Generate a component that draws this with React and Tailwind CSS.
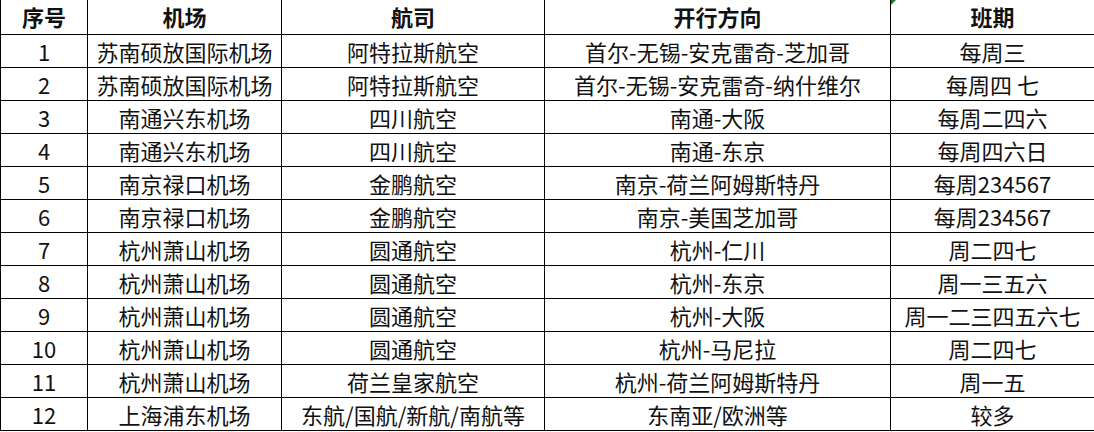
import React from "react";

const headers = ["序号", "机场", "航司", "开行方向", "班期"];

const rows = [
  ["1", "苏南硕放国际机场", "阿特拉斯航空", "首尔-无锡-安克雷奇-芝加哥", "每周三"],
  ["2", "苏南硕放国际机场", "阿特拉斯航空", "首尔-无锡-安克雷奇-纳什维尔", "每周四 七"],
  ["3", "南通兴东机场", "四川航空", "南通-大阪", "每周二四六"],
  ["4", "南通兴东机场", "四川航空", "南通-东京", "每周四六日"],
  ["5", "南京禄口机场", "金鹏航空", "南京-荷兰阿姆斯特丹", "每周234567"],
  ["6", "南京禄口机场", "金鹏航空", "南京-美国芝加哥", "每周234567"],
  ["7", "杭州萧山机场", "圆通航空", "杭州-仁川", "周二四七"],
  ["8", "杭州萧山机场", "圆通航空", "杭州-东京", "周一三五六"],
  ["9", "杭州萧山机场", "圆通航空", "杭州-大阪", "周一二三四五六七"],
  ["10", "杭州萧山机场", "圆通航空", "杭州-马尼拉", "周二四七"],
  ["11", "杭州萧山机场", "荷兰皇家航空", "杭州-荷兰阿姆斯特丹", "周一五"],
  ["12", "上海浦东机场", "东航/国航/新航/南航等", "东南亚/欧洲等", "较多"],
];

export default function App() {
  return (
    <div className="h-[432px] w-[1094px] overflow-hidden bg-[#ffffff] font-['Noto_Sans_CJK_SC',sans-serif] text-[22px] text-[#111111]">
      <table className="w-[1094px] table-fixed border-collapse">
        <colgroup>
          <col className="w-[87px]" />
          <col className="w-[194px]" />
          <col className="w-[263px]" />
          <col className="w-[346px]" />
          <col className="w-[204px]" />
        </colgroup>
        <thead>
          <tr>
            {headers.map((h, i) => (
              <th
                key={h}
                className="relative h-[34px] border-[1px] border-t-0 border-solid border-[#000000] p-0 text-center font-bold whitespace-nowrap"
              >
                {i === 4 && (
                  <span className="absolute left-0 top-0 h-[5px] w-[5px] bg-[#1b7d2c] [clip-path:polygon(0_0,100%_0,0_100%)]" />
                )}
                {h}
              </th>
            ))}
          </tr>
        </thead>
        <tbody>
          {rows.map((r) => (
            <tr key={r[0]}>
              {r.map((v, i) => (
                <td
                  key={i}
                  className="h-[33px] border-[1px] border-solid border-[#000000] p-0 text-center leading-none whitespace-nowrap"
                >
                  {v}
                </td>
              ))}
            </tr>
          ))}
        </tbody>
      </table>
    </div>
  );
}
